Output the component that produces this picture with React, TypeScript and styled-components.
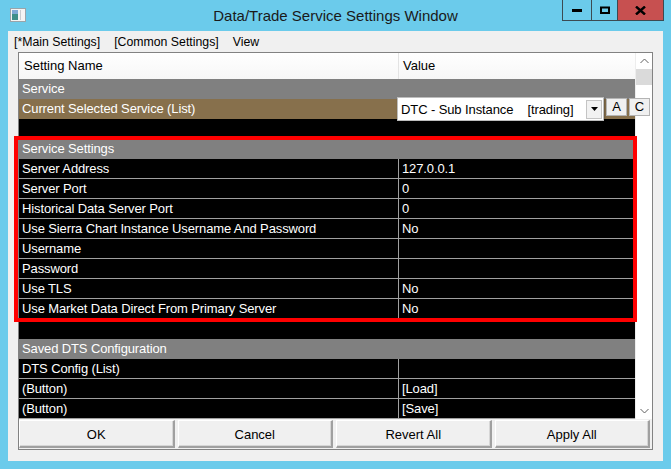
import React from 'react';
import styled, { createGlobalStyle } from 'styled-components';

const GlobalStyle = createGlobalStyle`
  html, body {
    margin: 0;
    padding: 0;
    background: #6bcbeb;
  }
  * {
    box-sizing: border-box;
  }
`;

const FrameColor = '#6bcbeb';
const UiFont = `"Liberation Sans", Arial, sans-serif`;

const Window = styled.div`
  width: 671px;
  height: 469px;
  background: ${FrameColor};
  display: flex;
  flex-direction: column;
  padding: 0 8px 8px 8px;
  font-family: ${UiFont};
  overflow: hidden;
`;

const TitleBar = styled.div`
  height: 31px;
  display: grid;
  grid-template-columns: 1fr auto 1fr;
  align-items: start;
`;

const AppIcon = styled.svg`
  justify-self: start;
  margin: 8px 0 0 2px;
`;

const Title = styled.div`
  font-size: 15px;
  line-height: 31px;
  color: #1a1a1a;
  white-space: nowrap;
`;

const Controls = styled.div`
  justify-self: end;
  display: flex;
  height: 21px;
  margin-right: -1px;
  border: 1px solid #3c4a52;
  border-top: none;
`;

const ControlButton = styled.div<{ $width: number; $close?: boolean }>`
  width: ${(p) => p.$width}px;
  height: 20px;
  display: flex;
  align-items: center;
  justify-content: center;
  background: ${(p) => (p.$close ? '#c75050' : 'transparent')};
  & + & {
    border-left: 1px solid #3c4a52;
  }
`;

const Client = styled.div`
  flex: 1;
  background: #f0f0f0;
  display: flex;
  flex-direction: column;
`;

const MenuBar = styled.div`
  height: 21px;
  display: flex;
  align-items: center;
  gap: 14px;
  padding: 1px 0 0 6px;
  font-size: 12.3px;
  color: #000;
`;

const MenuItem = styled.span`
  white-space: nowrap;
`;

const Frame = styled.div`
  flex: 1;
  margin: 0 10px 11px 10px;
  border: 1px solid #828282;
  display: flex;
  flex-direction: column;
`;

const GridArea = styled.div`
  display: flex;
  height: 366px;
`;

const Table = styled.div`
  position: relative;
  width: 616px;
  display: flex;
  flex-direction: column;
`;

const HeaderRow = styled.div`
  height: 26px;
  display: grid;
  grid-template-columns: 380px 1fr;
  background: linear-gradient(#ffffff, #f7f7f7);
  font-size: 13px;
  color: #000;
`;

const HeaderCell = styled.div<{ $first?: boolean }>`
  line-height: 26px;
  padding-left: ${(p) => (p.$first ? 5 : 4)}px;
  border-right: ${(p) => (p.$first ? '1px solid #e3e3e3' : 'none')};
`;

type RowKind = 'group' | 'selected' | 'blank' | 'data';

const rowBackground: Record<RowKind, string> = {
  group: '#808080',
  selected: '#87704c',
  blank: '#000000',
  data: '#000000',
};

const Row = styled.div<{ $kind: RowKind }>`
  height: 20px;
  display: grid;
  grid-template-columns: 380px 1fr;
  background: ${(p) => rowBackground[p.$kind]};
  border-bottom: ${(p) => (p.$kind === 'data' ? '1px solid #a0a0a0' : 'none')};
  color: #fff;
  font-size: 13px;
  letter-spacing: -0.12px;
  line-height: ${(p) => (p.$kind === 'data' ? 19 : 20)}px;
`;

const NameCell = styled.div<{ $divider: boolean }>`
  padding-left: 3px;
  white-space: nowrap;
  overflow: hidden;
  border-right: ${(p) => (p.$divider ? '1px solid #a0a0a0' : 'none')};
`;

const ValueCell = styled.div`
  padding-left: 3px;
  white-space: nowrap;
`;

const Highlight = styled.div`
  position: absolute;
  left: -5px;
  top: 83px;
  width: 623px;
  height: 186px;
  border: 4px solid #ff0000;
  z-index: 2;
  pointer-events: none;
`;

const ComboPopup = styled.div`
  position: absolute;
  left: 378px;
  top: 44px;
  display: flex;
  align-items: flex-start;
  gap: 2px;
  z-index: 3;
`;

const Combo = styled.div`
  width: 207px;
  height: 24px;
  background: #fff;
  border: 1px solid #bdbdbd;
  box-shadow: 1px 1px 2px rgba(0, 0, 0, 0.25);
  display: flex;
  align-items: center;
  padding: 0 1px 0 3px;
  font-size: 13px;
  letter-spacing: -0.1px;
  color: #000;
`;

const ComboText = styled.span`
  flex: 1;
  white-space: pre;
`;

const ComboArrow = styled.div`
  width: 16px;
  height: 19px;
  border: 1px solid #c4c4c4;
  background: #f2f2f2;
  display: flex;
  align-items: center;
  justify-content: center;
`;

const SmallButton = styled.div`
  width: 21px;
  height: 18px;
  margin-top: 1px;
  background: #f0f0f0;
  border: 1px solid #b4b4b4;
  font-size: 13px;
  line-height: 16px;
  text-align: center;
  color: #000;
`;

const ScrollBar = styled.div`
  width: 17px;
  background: #fff;
  display: flex;
  flex-direction: column;
  border-left: 1px solid #ededed;
`;

const ScrollArrow = styled.div`
  height: 16px;
  display: flex;
  align-items: center;
  justify-content: center;
  background: #fff;
`;

const ScrollThumb = styled.div`
  height: 16px;
  background: #dadada;
`;

const ScrollTrack = styled.div`
  flex: 1;
`;

const ButtonBar = styled.div`
  flex: 1;
  display: grid;
  grid-template-columns: repeat(4, 1fr);
  gap: 3px;
  padding: 1px 2px 1px 0;
`;

const ActionButton = styled.div`
  background: #f0f0f0;
  border-style: solid;
  border-width: 1px 2px 2px 1px;
  border-color: #ffffff #a0a0a0 #a0a0a0 #ffffff;
  box-shadow: inset -1px -1px 0 #d6d6d6;
  display: flex;
  align-items: center;
  justify-content: center;
  padding-top: 1px;
  font-size: 13px;
  color: #000;
`;

interface Setting {
  kind: RowKind;
  name?: string;
  value?: string;
}

const settings: Setting[] = [
  { kind: 'group', name: 'Service' },
  { kind: 'selected', name: 'Current Selected Service (List)' },
  { kind: 'blank' },
  { kind: 'group', name: 'Service Settings' },
  { kind: 'data', name: 'Server Address', value: '127.0.0.1' },
  { kind: 'data', name: 'Server Port', value: '0' },
  { kind: 'data', name: 'Historical Data Server Port', value: '0' },
  { kind: 'data', name: 'Use Sierra Chart Instance Username And Password', value: 'No' },
  { kind: 'data', name: 'Username', value: '' },
  { kind: 'data', name: 'Password', value: '' },
  { kind: 'data', name: 'Use TLS', value: 'No' },
  { kind: 'data', name: 'Use Market Data Direct From Primary Server', value: 'No' },
  { kind: 'blank' },
  { kind: 'group', name: 'Saved DTS Configuration' },
  { kind: 'data', name: 'DTS Config (List)', value: '' },
  { kind: 'data', name: '(Button)', value: '[Load]' },
  { kind: 'data', name: '(Button)', value: '[Save]' },
];

const WindowIcon = () => (
  <AppIcon width="16" height="14" viewBox="0 0 16 14">
    <rect x="0.5" y="0.5" width="15" height="13" fill="#f4f4f4" stroke="#9aa4aa" />
    <rect x="2" y="2" width="6" height="10" fill="#3f8f8a" />
    <rect x="2" y="2" width="6" height="4" fill="#7fa9d6" />
    <rect x="10" y="2" width="1" height="10" fill="#c8ccd0" />
  </AppIcon>
);

const Chevron = ({ up }: { up: boolean }) => (
  <svg width="9" height="6" viewBox="0 0 9 6">
    <path
      d={up ? 'M0.5 5 L4.5 1 L8.5 5' : 'M0.5 1 L4.5 5 L8.5 1'}
      fill="none"
      stroke="#606060"
      strokeWidth="1"
    />
  </svg>
);

const App = () => (
  <>
    <GlobalStyle />
    <Window>
      <TitleBar>
        <WindowIcon />
        <Title>Data/Trade Service Settings Window</Title>
        <Controls>
          <ControlButton $width={28}>
            <svg width="10" height="3" viewBox="0 0 10 3">
              <rect width="10" height="3" fill="#000" />
            </svg>
          </ControlButton>
          <ControlButton $width={26}>
            <svg width="10" height="8" viewBox="0 0 10 8">
              <rect x="1" y="1.5" width="8" height="5.5" fill="none" stroke="#000" strokeWidth="2" />
            </svg>
          </ControlButton>
          <ControlButton $width={46} $close>
            <svg width="11" height="9" viewBox="0 0 11 9">
              <path d="M1 0.5 L10 8.5 M10 0.5 L1 8.5" stroke="#000" strokeWidth="2.4" />
            </svg>
          </ControlButton>
        </Controls>
      </TitleBar>
      <Client>
        <MenuBar>
          <MenuItem>[*Main Settings]</MenuItem>
          <MenuItem>[Common Settings]</MenuItem>
          <MenuItem>View</MenuItem>
        </MenuBar>
        <Frame>
          <GridArea>
            <Table>
              <HeaderRow>
                <HeaderCell $first>Setting Name</HeaderCell>
                <HeaderCell>Value</HeaderCell>
              </HeaderRow>
              {settings.map((s, i) => (
                <Row key={i} $kind={s.kind}>
                  <NameCell $divider={s.kind === 'data'}>{s.name}</NameCell>
                  <ValueCell>{s.value}</ValueCell>
                </Row>
              ))}
              <ComboPopup>
                <Combo>
                  <ComboText>{'DTC - Sub Instance    [trading]'}</ComboText>
                  <ComboArrow>
                    <svg width="7" height="4" viewBox="0 0 7 4">
                      <path d="M0 0 L7 0 L3.5 4 Z" fill="#000" />
                    </svg>
                  </ComboArrow>
                </Combo>
                <SmallButton>A</SmallButton>
                <SmallButton>C</SmallButton>
              </ComboPopup>
              <Highlight />
            </Table>
            <ScrollBar>
              <ScrollArrow>
                <Chevron up />
              </ScrollArrow>
              <ScrollThumb />
              <ScrollTrack />
              <ScrollArrow>
                <Chevron up={false} />
              </ScrollArrow>
            </ScrollBar>
          </GridArea>
          <ButtonBar>
            <ActionButton>OK</ActionButton>
            <ActionButton>Cancel</ActionButton>
            <ActionButton>Revert All</ActionButton>
            <ActionButton>Apply All</ActionButton>
          </ButtonBar>
        </Frame>
      </Client>
    </Window>
  </>
);

export default App;
